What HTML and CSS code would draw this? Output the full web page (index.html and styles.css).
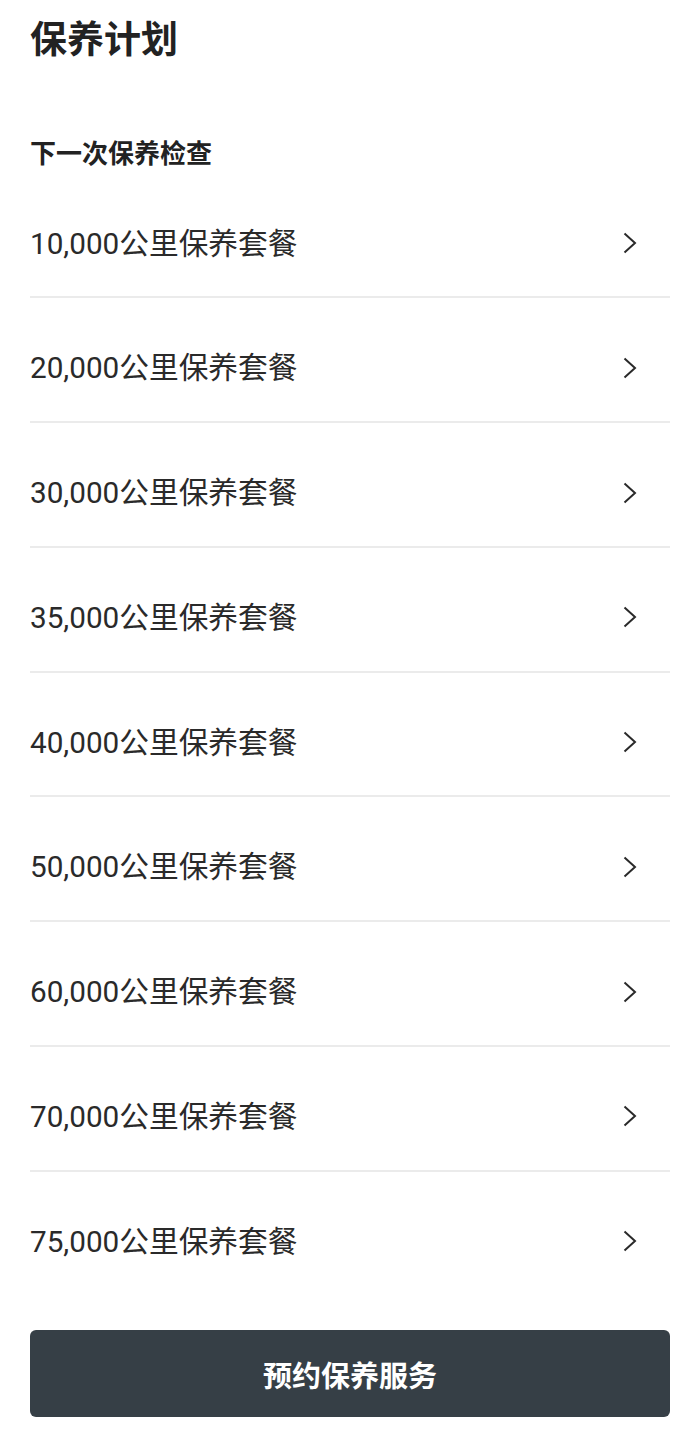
FILE: index.html
```html
<!DOCTYPE html>
<html lang="zh-CN">
<head>
  <meta charset="UTF-8">
  <meta name="viewport" content="width=device-width, initial-scale=1.0">
  <title>保养计划</title>
  <link rel="stylesheet" href="styles.css">
</head>
<body>
  <h1 class="title">保养计划</h1>
  <h2 class="section">下一次保养检查</h2>

  <ul class="plan-list">
    <li class="plan-item"><span>10,000公里保养套餐</span><svg class="chevron" viewBox="0 0 14 22"><path d="M1.5 1.5 L12 11 L1.5 20.5"/></svg></li>
    <li class="plan-item"><span>20,000公里保养套餐</span><svg class="chevron" viewBox="0 0 14 22"><path d="M1.5 1.5 L12 11 L1.5 20.5"/></svg></li>
    <li class="plan-item"><span>30,000公里保养套餐</span><svg class="chevron" viewBox="0 0 14 22"><path d="M1.5 1.5 L12 11 L1.5 20.5"/></svg></li>
    <li class="plan-item"><span>35,000公里保养套餐</span><svg class="chevron" viewBox="0 0 14 22"><path d="M1.5 1.5 L12 11 L1.5 20.5"/></svg></li>
    <li class="plan-item"><span>40,000公里保养套餐</span><svg class="chevron" viewBox="0 0 14 22"><path d="M1.5 1.5 L12 11 L1.5 20.5"/></svg></li>
    <li class="plan-item"><span>50,000公里保养套餐</span><svg class="chevron" viewBox="0 0 14 22"><path d="M1.5 1.5 L12 11 L1.5 20.5"/></svg></li>
    <li class="plan-item"><span>60,000公里保养套餐</span><svg class="chevron" viewBox="0 0 14 22"><path d="M1.5 1.5 L12 11 L1.5 20.5"/></svg></li>
    <li class="plan-item"><span>70,000公里保养套餐</span><svg class="chevron" viewBox="0 0 14 22"><path d="M1.5 1.5 L12 11 L1.5 20.5"/></svg></li>
    <li class="plan-item"><span>75,000公里保养套餐</span><svg class="chevron" viewBox="0 0 14 22"><path d="M1.5 1.5 L12 11 L1.5 20.5"/></svg></li>
  </ul>

  <button class="book-btn">预约保养服务</button>
</body>
</html>
```

FILE: styles.css
```css
body {
  margin: 0;
  padding: 0 30px;
  background: #fff;
  color: #222;
  font-family: Roboto, "Noto Sans CJK SC", sans-serif;
}
.title {
  font-size: 37px;
  font-weight: bold;
  line-height: 50px;
  margin: 16px 0 0;
}
.section {
  font-size: 26px;
  font-weight: bold;
  line-height: 36px;
  margin: 70px 0 0;
}
.plan-list {
  list-style: none;
  margin: 1.5px 0 0;
  padding: 0;
}
.plan-item {
  display: flex;
  align-items: center;
  justify-content: space-between;
  padding: 52px 33px 35.75px 0;
  font-size: 29.7px;
  line-height: 35px;
  color: #2a2a2a;
  border-bottom: 2px solid #ebebeb;
}
.plan-item:last-child {
  border-bottom: none;
}
.chevron {
  width: 14px;
  height: 22px;
  fill: none;
  stroke: #2a2a2a;
  stroke-width: 2;
}
.book-btn {
  display: block;
  width: 100%;
  height: 87px;
  margin-top: 36px;
  border: none;
  border-radius: 6px;
  background: #363f46;
  color: #fff;
  font-family: Roboto, "Noto Sans CJK SC", sans-serif;
  font-size: 29px;
  font-weight: bold;
}
```
